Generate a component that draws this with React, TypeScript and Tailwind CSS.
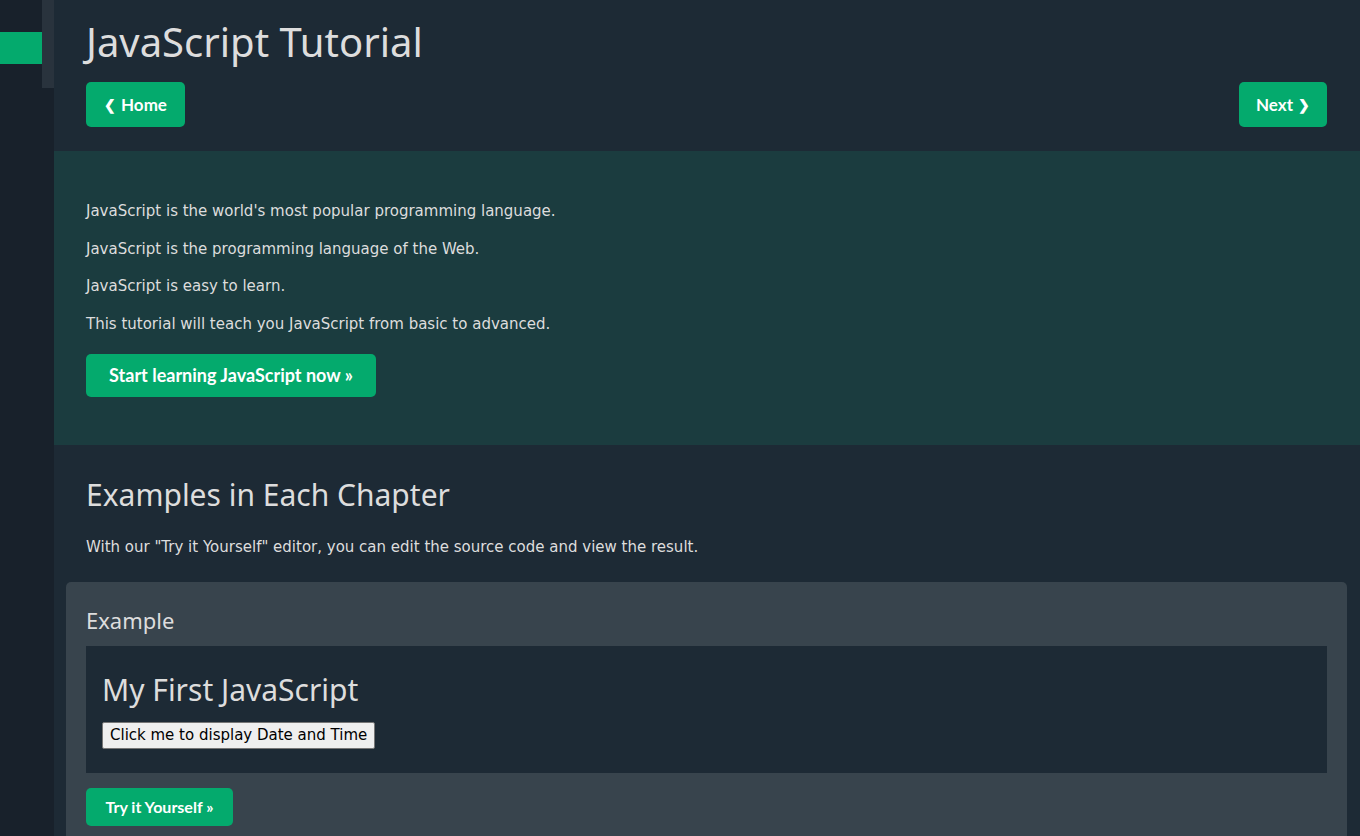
import React from "react";

const heading = { fontFamily: '"Noto Sans", "Open Sans", sans-serif' };
const body = { fontFamily: '"DejaVu Sans", Verdana, sans-serif' };
const btn = { fontFamily: 'Lato, "Open Sans", sans-serif' };

export default function App() {
  return (
    <div className="flex min-h-[836px] w-[1360px] overflow-hidden bg-[#1d2a35] text-[#dddddd]">
      {/* Sidebar */}
      <div className="flex w-[54px] shrink-0 bg-[#18212b]">
        <div className="w-[42px]">
          <div className="mt-[32px] h-[32px] bg-[#04aa6d]" />
        </div>
        <div className="w-[12px]">
          <div className="h-[88px] bg-[#29333d]" />
        </div>
      </div>

      {/* Main */}
      <div className="flex min-w-0 flex-1 flex-col">
        <div className="pl-[32px] pr-[33px] pt-[15px] pb-[24px]">
          <h1 className="text-[40px] leading-[54px] text-[#dddddd]" style={heading}>
            JavaScript Tutorial
          </h1>
          <div className="mt-[13px] flex items-center justify-between">
            <a
              className="flex h-[45px] w-[99px] items-center justify-center rounded-[5px] bg-[#04aa6d] text-[17px] font-bold text-white"
              style={btn}
            >
              <span className="mr-[5px] text-[14px]">❮</span>Home
            </a>
            <a
              className="flex h-[45px] w-[88px] items-center justify-center rounded-[5px] bg-[#04aa6d] text-[17px] font-bold text-white"
              style={btn}
            >
              Next<span className="ml-[5px] text-[14px]">❯</span>
            </a>
          </div>
        </div>

        <div className="bg-[#1b3c3f] pl-[32px] pr-[33px] pt-[49px] pb-[48px]" style={body}>
          <p className="text-[15px] leading-[22.5px]">JavaScript is the world's most popular programming language.</p>
          <p className="mt-[15px] text-[15px] leading-[22.5px]">JavaScript is the programming language of the Web.</p>
          <p className="mt-[15px] text-[15px] leading-[22.5px]">JavaScript is easy to learn.</p>
          <p className="mt-[15px] text-[15px] leading-[22.5px]">This tutorial will teach you JavaScript from basic to advanced.</p>
          <a
            className="mt-[19px] flex h-[43px] w-[290px] items-center justify-center rounded-[5px] bg-[#04aa6d] text-[18px] font-bold text-white"
            style={btn}
          >
            Start learning JavaScript now »
          </a>
        </div>

        <div className="pl-[32px] pr-[33px] pt-[28px]">
          <h2 className="text-[30px] leading-[44px] text-[#dddddd]" style={heading}>
            Examples in Each Chapter
          </h2>
          <p className="mt-[19px] text-[15px] leading-[22.5px]" style={body}>
            With our "Try it Yourself" editor, you can edit the source code and view the result.
          </p>
        </div>

        <div className="ml-[12px] mr-[13px] mt-[23px] flex-1 rounded-t-[5px] bg-[#38444d] px-[20px] pt-[22px] pb-[16px]">
          <h3 className="text-[22px] leading-[32px] text-[#dddddd]" style={heading}>
            Example
          </h3>
          <div className="mt-[10px] bg-[#1d2a35] px-[16px] pt-[24px] pb-[24px]">
            <div className="text-[30px] leading-[40px] text-[#dddddd]" style={heading}>
              My First JavaScript
            </div>
            <button
              className="mt-[12px] flex h-[27px] items-center rounded-[2px] border border-[#767676] bg-[#efefef] px-[7px] text-[15px] text-black"
              style={body}
            >
              Click me to display Date and Time
            </button>
          </div>
          <a
            className="mt-[15px] flex h-[38px] w-[147px] items-center justify-center rounded-[5px] bg-[#04aa6d] text-[16px] font-bold text-white"
            style={btn}
          >
            Try it Yourself »
          </a>
        </div>
      </div>
    </div>
  );
}
